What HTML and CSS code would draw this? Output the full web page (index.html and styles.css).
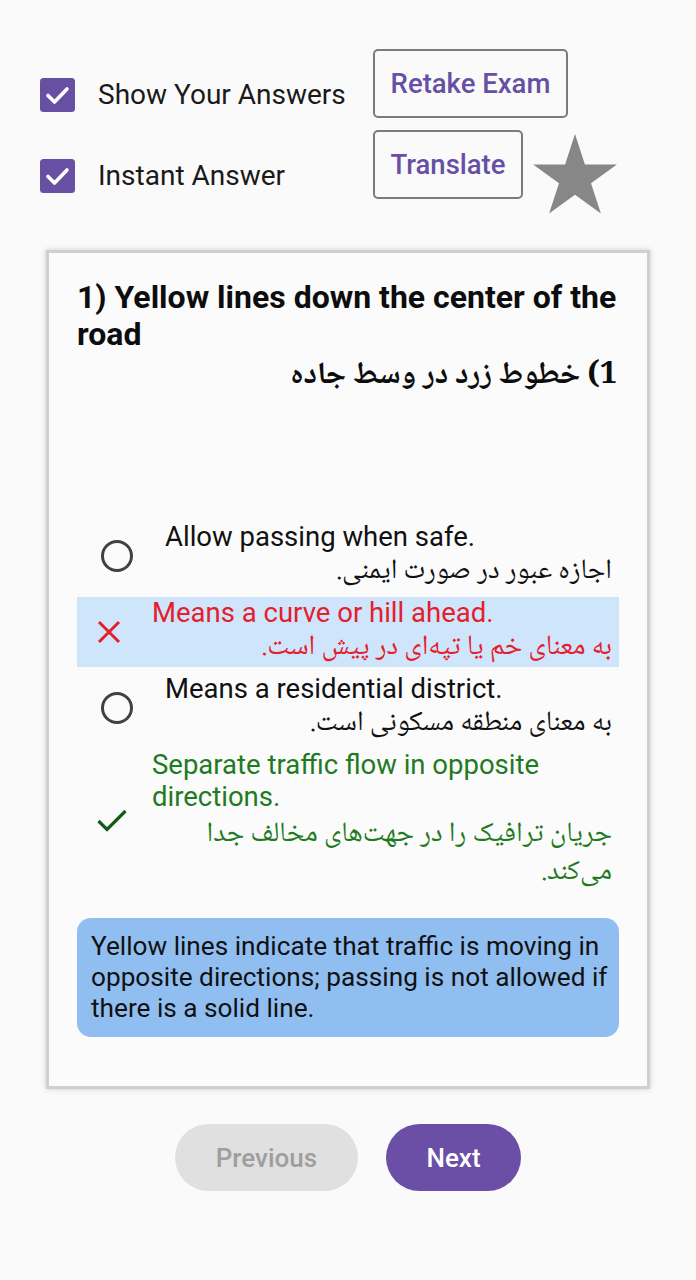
FILE: index.html
```html
<!DOCTYPE html>
<html lang="en">
<head>
<meta charset="utf-8">
<title>Exam</title>
<link rel="stylesheet" href="styles.css">
</head>
<body>
<div class="page">
  <div class="toprow">
    <label class="check-item">
      <svg class="cb" width="35" height="34" viewBox="0 0 35 34"><rect x="0" y="0" width="35" height="34" rx="3.5" fill="#6750a4"/><path d="M8 17.5 L14.5 24 L27 11" fill="none" stroke="#fff" stroke-width="3.6" stroke-linecap="round" stroke-linejoin="round"/></svg>
      <span class="cb-label">Show Your Answers</span>
    </label>
    <button class="obtn retake">Retake Exam</button>
  </div>
  <div class="toprow">
    <label class="check-item">
      <svg class="cb" width="35" height="34" viewBox="0 0 35 34"><rect x="0" y="0" width="35" height="34" rx="3.5" fill="#6750a4"/><path d="M8 17.5 L14.5 24 L27 11" fill="none" stroke="#fff" stroke-width="3.6" stroke-linecap="round" stroke-linejoin="round"/></svg>
      <span class="cb-label">Instant Answer</span>
    </label>
    <button class="obtn translate">Translate</button>
    <svg class="star" width="84" height="80" viewBox="0 0 84 80"><polygon points="42,0 51.9,30.4 83.9,30.4 58,49.2 67.9,79.6 42,60.8 16.1,79.6 26,49.2 0.1,30.4 32.1,30.4" fill="#878787"/></svg>
  </div>

  <div class="card">
    <h1 class="q-en">1) Yellow lines down the center of the road</h1>
    <h2 class="q-fa" dir="rtl">1) خطوط زرد در وسط جاده</h2>
    <div class="spacer"></div>

    <div class="opt">
      <div class="opt-icon radio-wrap"><span class="radio"></span></div>
      <div class="opt-text">
        <div class="en">Allow passing when safe.</div>
        <div class="fa" dir="rtl">اجازه عبور در صورت ایمنی.</div>
      </div>
    </div>

    <div class="opt wrong">
      <div class="opt-icon mark-wrap">
        <svg width="24" height="24" viewBox="0 0 24 24"><path d="M2 2 L22 22 M22 2 L2 22" stroke="#e3202b" stroke-width="3"/></svg>
      </div>
      <div class="opt-text">
        <div class="en">Means a curve or hill ahead.</div>
        <div class="fa" dir="rtl">به معنای خم یا تپه‌ای در پیش است.</div>
      </div>
    </div>

    <div class="opt">
      <div class="opt-icon radio-wrap"><span class="radio"></span></div>
      <div class="opt-text">
        <div class="en">Means a residential district.</div>
        <div class="fa" dir="rtl">به معنای منطقه مسکونی است.</div>
      </div>
    </div>

    <div class="opt right">
      <div class="opt-icon mark-wrap">
        <svg width="30" height="24" viewBox="0 0 30 24"><path d="M1.5 12 L10 20.5 L28.5 2" fill="none" stroke="#155a17" stroke-width="3.2"/></svg>
      </div>
      <div class="opt-text">
        <div class="en">Separate traffic flow in opposite directions.</div>
        <div class="fa" dir="rtl">جریان ترافیک را در جهت‌های مخالف جدا می‌کند.</div>
      </div>
    </div>

    <div class="explain">Yellow lines indicate that traffic is moving in opposite directions; passing is not allowed if there is a solid line.</div>
  </div>

  <div class="nav">
    <button class="pill prev">Previous</button>
    <button class="pill next">Next</button>
  </div>
</div>
</body>
</html>
```

FILE: styles.css
```css
* { box-sizing: border-box; }

html, body {
  margin: 0;
  padding: 0;
  background: #fafafa;
}

body {
  font-family: Roboto, "Noto Sans", sans-serif;
  color: #111;
}

.page {
  padding: 49px 0 40px 40px;
}

.toprow {
  display: flex;
  align-items: flex-start;
  height: 69px;
  margin-bottom: 12px;
}

.check-item {
  width: 333px;
  height: 69px;
  margin-top: 11px;
  display: flex;
  align-items: center;
  gap: 23px;
}

.cb { flex: none; }

.cb-label {
  font-size: 28px;
  color: #1a1a1a;
}

.obtn {
  height: 69px;
  border: 2px solid #7b7b7b;
  border-radius: 5px;
  background: transparent;
  color: #6750a4;
  font-family: Roboto, sans-serif;
  font-weight: 500;
  font-size: 27.5px;
  padding: 0;
}

.retake { width: 195px; }
.translate { width: 150px; }

.star {
  margin-left: 10px;
  margin-top: 4px;
  flex: none;
}

.card {
  width: 604px;
  margin: 51px 0 0 6px;
  border: 3px solid #cfcfcf;
  box-shadow: 0 0 6px rgba(0, 0, 0, 0.18);
  background: #fbfbfb;
  padding: 26px 30px 49px 28px;
}

.q-en {
  margin: 0;
  font-size: 32px;
  line-height: 37px;
  font-weight: 700;
  color: #0d0d0d;
}

.q-fa {
  margin: 5px 0 0 0;
  font-family: "Noto Naskh Arabic", "Noto Sans Arabic", "DejaVu Sans", sans-serif;
  font-size: 31px;
  line-height: 38px;
  font-weight: 700;
  color: #0d0d0d;
  text-align: right;
}

.spacer { height: 125px; }

.opt {
  display: flex;
  align-items: center;
  margin-bottom: 6px;
  width: 542px;
}

.opt.wrong { background: #cfe5fb; }

.opt-icon {
  flex: none;
  display: flex;
  align-items: center;
}

.radio-wrap {
  width: 88px;
  padding-left: 24px;
}

.radio {
  width: 32px;
  height: 32px;
  border: 3.5px solid #414141;
  border-radius: 50%;
}

.mark-wrap {
  width: 75px;
  padding-left: 20px;
}

.opt-text {
  flex: 1;
  padding-right: 7px;
}

.en {
  font-size: 27.5px;
  line-height: 32px;
  color: #111;
}

.fa {
  font-family: "Noto Naskh Arabic", "Noto Sans Arabic", "DejaVu Sans", sans-serif;
  font-size: 28px;
  line-height: 38px;
  text-align: right;
  color: #111;
}

.right .fa { padding-top: 3px; }

.wrong .en, .wrong .fa { color: #e3202b; }
.right .en, .right .fa { color: #1f7a22; }

.explain {
  margin: 26px 0 0 0;
  width: 542px;
  background: #90bef0;
  border-radius: 14px;
  padding: 13px 8px 13px 14px;
  font-size: 26.2px;
  line-height: 31px;
  color: #111;
}

.nav {
  display: flex;
  justify-content: center;
  gap: 28px;
  margin: 35px 40px 0 0;
}

.pill {
  height: 67px;
  border: none;
  border-radius: 34px;
  font-family: Roboto, sans-serif;
  font-weight: 500;
  font-size: 26px;
  padding: 0;
}

.prev {
  width: 183px;
  background: #e0e0e0;
  color: #9e9e9e;
}

.next {
  width: 135px;
  background: #6b4fa6;
  color: #fff;
}
```
